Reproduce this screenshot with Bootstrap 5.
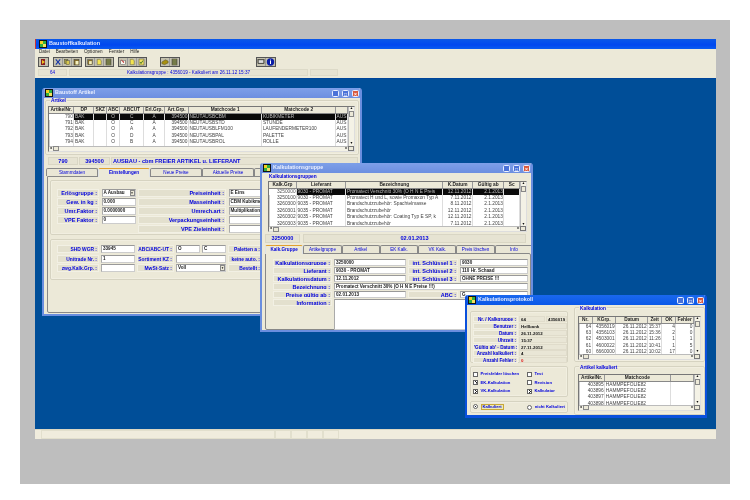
<!DOCTYPE html>
<html lang="de">
<head>
  <meta charset="UTF-8" />
  <title>Baustoffkalkulation</title>
  <link href="https://cdn.jsdelivr.net/npm/bootstrap@5.3.0/dist/css/bootstrap.min.css" rel="stylesheet" />
  <style>
    html, body { margin: 0; width: 750px; height: 500px; overflow: hidden; background: #fff; }
    body { font-family: "Liberation Sans", Arial, sans-serif; font-size: 5px; line-height: 1; color: #333; }
    .frame { width: 710px; height: 464px; margin: 20px 0 0 20px; background: #bebebe; padding: 19px 14px 45px 15px; filter: blur(.3px); }
    .app { height: 100%; background: #ece9d8; }
    .app-title { height: 10px; background: linear-gradient(#0a58e8, #0048f0 60%, #0a5cf0); color: #dfe8ff; font-weight: 700; font-size: 5.5px; padding-left: 3px; gap: 2px; border-left: 1px solid #c33; }
    .app-menu { height: 7px; padding-left: 4px; color: #222; font-size: 4.6px; }
    .app-menu span { margin-right: 6px; }
    .app-tools { height: 12px; padding: 1px 0 0 3px; }
    .tb-group { display: flex; border: 1px solid #555; background: #c4c1ae; margin-right: 3.5px; height: 10px; }
    .tb-group svg { width: 9px; height: 8px; border-right: 1px solid #999; }
    .tb-group svg:last-child { border-right: 0; }
    .tb-gap1 { margin-left: 10px; }
    .tb-gap2 { margin-left: 72px; }
    .app-info { height: 10px; padding: 1px 0 2px 3px; gap: 2px; color: #00d; font-size: 4.6px; }
    .app-info div { background: #e6e3d2; border: 1px solid #dddac8; text-align: center; line-height: 6px; }
    .ai-a { width: 29px; } .ai-b { width: 239px; } .ai-c { width: 28px; }
    .desktop { background: #004e98; overflow: hidden; border-top: 1px solid #00459a; }
    .app-status { height: 10px; background: #f0ecdd; padding-left: 6px; border-top: 1px solid #dcd8c4; }
    .app-status div { border: 1px solid #e2dfcd; }
    .st-a { width: 234px; } .st-b { width: 16px; }

    .xp-win { background: #ece9d8; border: 2px solid #6a8edf; border-top: 0; border-radius: 3px 3px 0 0; overflow: hidden; }
    .win-artikel { left: 7px; top: 9px; width: 320px; height: 228px; }
    .win-kalk { left: 225px; top: 84px; width: 273px; height: 169px; }
    .win-prot { left: 430px; top: 216px; width: 242px; height: 123px; border-color: #0a50dc; border-bottom-width: 3px; }
    .win-title { height: 10px; flex: none; background: linear-gradient(#7d9fe8, #6d8fe0); color: #e8eeff; font-weight: 700; font-size: 5.4px; padding: 0 1px 0 1px; gap: 2px; }
    .win-prot .win-title { background: linear-gradient(#1a68ee, #0a58e8); }
    .win-btn { width: 7px; height: 7px; border-radius: 1.5px; border: .5px solid #e8eeff; background: #4a72d8; margin-left: 1px; color: #fff; font-size: 5px; line-height: 6px; text-align: center; }
    .win-btn.x-btn { background: #d8583c; }
    .app-ico { width: 8px; height: 8px; flex: none; }

    .grp { position: relative; border: 1px solid #d6d3c1; border-radius: 2px; box-shadow: inset 0 0 0 .5px #f6f4e8; }
    .grp-name { position: absolute; left: 4px; top: -2px; color: #00d; font-weight: 700; font-size: 4.8px; background: #ece9d8; padding: 0 1px; }
    .art-group { margin: 2px 1px 0; height: 55px; padding: 5px 3px 0 2px; }
    .kalk-group { margin: 5px 1px 0 4px; height: 55px; padding: 3px 3px 0 2px; }
    .kalk-group .grp-name { top: -3px; left: 2px; }

    .grid-box { display: grid; grid-template-columns: 1fr 6px; grid-template-rows: 1fr 5.5px; border: 1px solid #777; border-right-color: #ddd; border-bottom-color: #ddd; background: #fff; box-shadow: inset 0 0 0 .5px #999; }
    .art-box { height: 46px; } .kalk-box { height: 51px; grid-template-rows: 1fr 5px; }
    .pk-box1 { height: 44px; } .pk-box2 { height: 37px; }
    .grid-view { overflow: hidden; }
    .xp-grid { border-collapse: collapse; table-layout: fixed; font-size: 4.8px; color: #444; white-space: nowrap; }
    .xp-grid th { background: #ece9d8; color: #222; font-weight: 700; text-align: center; height: 5.5px; line-height: 5.5px; padding: 0; border-right: .5px solid #999; border-bottom: .5px solid #888; overflow: hidden; }
    .xp-grid td { height: 6.4px; line-height: 6.4px; padding: 0 .5px; border-right: .5px solid #ddd; overflow: hidden; }
    .xp-grid tr.sel td { background: #0a0a0a; color: #bbb; }
    .xp-grid tr.sel td:first-child { background: #fff; color: #555; }
    .num { text-align: right; } .mid { text-align: center; }
    .vbar, .hbar { background: #f4f2e6; color: #111; font-size: 3.4px; display: flex; justify-content: space-between; }
    .vbar { flex-direction: column; align-items: center; border-left: .5px solid #bbb; }
    .hbar { align-items: center; border-top: .5px solid #bbb; }
    .thumb-h { width: 6px; height: 5px; background: #ece9d8; border: .5px solid #888; margin-right: auto; margin-left: 1px; }
    .thumb-v { width: 5px; height: 6px; background: #ece9d8; border: .5px solid #888; margin-bottom: auto; margin-top: 1px; }
    .corner { background: #ece9d8; border: .5px solid #777; }
    .art-cols th:nth-child(1) { width: 25px; } .art-cols th:nth-child(2) { width: 20px; } .art-cols th:nth-child(3), .art-cols th:nth-child(4) { width: 13px; }
    .art-cols th:nth-child(5) { width: 24px; } .art-cols th:nth-child(6) { width: 21px; } .art-cols th:nth-child(7) { width: 24px; }
    .art-cols th:nth-child(8), .art-cols th:nth-child(9) { width: 74px; } .art-cols th:nth-child(10) { width: 11px; }
    .kalk-cols th:nth-child(1) { width: 28px; } .kalk-cols th:nth-child(2) { width: 50px; } .kalk-cols th:nth-child(3) { width: 97px; }
    .kalk-cols th:nth-child(4) { width: 30px; } .kalk-cols th:nth-child(5) { width: 32px; } .kalk-cols th:nth-child(6) { width: 16px; }
    .pk-cols th:nth-child(1) { width: 14px; } .pk-cols th:nth-child(2) { width: 24px; } .pk-cols th:nth-child(3) { width: 33px; }
    .pk-cols th:nth-child(4) { width: 13px; } .pk-cols th:nth-child(5) { width: 15px; } .pk-cols th:nth-child(6) { width: 18px; }
    .pa-cols th:nth-child(1) { width: 26px; } .pa-cols th:nth-child(2) { width: 67px; } .pa-cols th:nth-child(3) { width: 25px; }

    .head-strip { gap: 1px; color: #00d; font-weight: 700; font-size: 5.6px; }
    .head-strip div { background: #e6e3d2; border: 1px solid #d9d6c4; line-height: 6px; white-space: nowrap; overflow: hidden; }
    .art-strip { margin: 2px 1px 0 4px; height: 8px; }
    .as-a { width: 30px; text-align: center; } .as-b { width: 31px; text-align: center; } .as-c { width: 247px; padding-left: 1px; }
    .kalk-strip { margin: 1px 1px 0 3px; height: 9px; gap: 3px; }
    .ks-a { width: 35px; text-align: center; } .ks-b { width: 223px; text-align: center; }

    .xp-tabs { --bs-nav-tabs-border-width: 0; flex-wrap: nowrap; border: 0; height: 8px; }
    .xp-tabs .nav-link { padding: 0; height: 8px; line-height: 8px; font-size: 4.6px; text-align: center; color: #00d; background: #e9e6d5; border: .5px solid #888; border-bottom: 0; border-radius: 2px 2px 0 0; margin: 0; }
    .xp-tabs .nav-link.active { background: #ece9d8; font-weight: 700; color: #00d; border-top: 1px solid #e0a030; height: 9px; position: relative; z-index: 1; }
    .art-tabs { margin: 3px 0 0 2px; } .art-tabs .nav-link { width: 52px; }
    .kalk-tabs { margin: 2px 0 0 3px; } .kalk-tabs .nav-link { width: 38.3px; }
    .tab-panel { border: .5px solid #888; border-radius: 0 2px 2px 2px; }
    .art-panel { margin: 0 2px 0 3px; height: 137px; padding: 3px 2px; }
    .kalk-panel { margin: 0 0 0 3px; height: 77px; padding: 5px 4px 0 7px; }

    .lbl { background: #e3e0ce; color: #00d; font-weight: 700; font-size: 5.5px; text-align: right; line-height: 7px; white-space: nowrap; overflow: hidden; padding-right: 1px; border: .5px solid #f2f0e4; }
    .fld { background: #fff; border: .5px solid #ccc; border-top-color: #999; border-left-color: #aaa; color: #222; font-weight: 700; font-size: 4.6px; line-height: 6.5px; padding-left: 1px; white-space: nowrap; overflow: hidden; display: flex; justify-content: space-between; }
    .combo-arrow { width: 5px; background: #ece9d8; border: .5px solid #888; color: #111; font-size: 3px; line-height: 5.5px; text-align: center; }
    .form-a { height: 55px; padding: 8px 0 0 6px; display: grid; grid-template-columns: 42px 34px 88px 72px; grid-auto-rows: 8px; gap: 1px 2.5px; margin-bottom: 4px; }
    .form-b { height: 41px; padding: 5px 0 0 6px; display: grid; grid-template-columns: 42px 34px 37px 24px 24px 34px 60px; grid-auto-rows: 8px; gap: 1.5px 2px; }
    .form-b .lbl { font-size: 4.9px; }
    .span-2 { grid-column: span 2; }
    .skip-2 { grid-column: 3; }
    .form-k { display: grid; grid-template-columns: 59px 72px 50px 68px; grid-auto-rows: 7px; gap: 1px 2px; }
    .form-k .lbl { line-height: 6px; } .form-k .fld { line-height: 6px; }
    .span-3 { grid-column: span 3; }
    .form-k .tall { grid-row: span 4; }

    .pk-left { width: 98px; margin-left: 3px; }
    .pk-right { width: 131px; margin-left: 6px; }
    .pk-fields { height: 52px; margin-top: 6px; padding: 4px 2px 0; display: grid; grid-template-columns: 45px 26px 21px; grid-auto-rows: 6px; gap: .9px 1px; }
    .pk-fields .lbl { line-height: 5px; font-size: 4.6px; }
    .pk-fields .fld { line-height: 5px; font-size: 4.4px; border-color: #e0dccb; background: #e9e6d6; color: #111; }
    .err-red { color: #e01010 !important; }
    .pk-checks { height: 31px; margin-top: 3px; padding: 3px 2px 0; display: grid; grid-template-columns: 54px 40px; grid-auto-rows: 8.5px; }
    .pk-radio { height: 12px; margin-top: 4px; padding: 0 2px; }
    .opt { color: #00d; font-weight: 700; font-size: 4.2px; gap: 2.5px; white-space: nowrap; }
    .opt input { appearance: none; width: 5px; height: 5px; margin: 0; background: #fff; border: .5px solid #666; flex: none; }
    .opt input:checked { background: linear-gradient(45deg, transparent 42%, #222 42% 62%, transparent 62%) 1px 0 / 3.5px 4px no-repeat, linear-gradient(-45deg, transparent 42%, #222 42% 62%, transparent 62%) 0 1.5px / 2.5px 3px no-repeat, #fff; }
    .opt input[type=radio] { border-radius: 50%; }
    .opt input[type=radio]:checked { background: #fff radial-gradient(circle, #222 38%, transparent 42%); }
    .focus-box { border: .5px solid #c9a838; background: #ecebb8; padding: 0 1px; }
    .radio-a { width: 55px; }
    .pk-g1 { height: 55px; margin-top: 2px; padding: 8px 3px 0; }
    .pk-g2 { height: 49px; margin-top: 4px; padding: 7px 3px 0; }
    .pk-right .grp-name { top: -1px; }
  </style>
</head>
<body>
  <svg class="d-none">
    <symbol id="i-app" viewBox="0 0 8 8"><rect x="0" y="0" width="8" height="8" fill="#111"/><rect x="1" y="1" width="3" height="3" fill="#f4d020"/><rect x="4" y="1" width="3" height="3" fill="#30b040"/><rect x="1" y="4" width="3" height="3" fill="#30b040"/><rect x="4" y="4" width="3" height="3" fill="#f4e060"/></symbol>
    <symbol id="i-exit" viewBox="0 0 9 8"><rect x="2" y="1" width="4" height="6" fill="#8a2020"/><path d="M3 2l3 2-3 2z" fill="#f0c820"/></symbol>
    <symbol id="i-cut" viewBox="0 0 9 8"><path d="M2 1l5 6M7 1L2 7" stroke="#1838a8" stroke-width="1.2"/></symbol>
    <symbol id="i-copy" viewBox="0 0 9 8"><rect x="1.5" y="1" width="4" height="5" fill="#a8a040" stroke="#444" stroke-width=".5"/><rect x="3.5" y="2.5" width="4" height="4.5" fill="#d8c850" stroke="#444" stroke-width=".5"/></symbol>
    <symbol id="i-paste" viewBox="0 0 9 8"><rect x="2" y="1.5" width="5" height="5.5" fill="#88702c" stroke="#333" stroke-width=".5"/><rect x="3.5" y="3" width="3" height="3.5" fill="#f4f0c0"/></symbol>
    <symbol id="i-doc" viewBox="0 0 9 8"><path d="M2.5 1h3l1.500 1.500V7h-4.500z" fill="#f4e450" stroke="#444" stroke-width=".5"/></symbol>
    <symbol id="i-tick" viewBox="0 0 9 8"><rect x="2" y="1" width="5" height="6" fill="#f0e060" stroke="#444" stroke-width=".5"/><path d="M3 4l1 1.500 2-3" stroke="#206020" stroke-width=".8" fill="none"/></symbol>
    <symbol id="i-pen" viewBox="0 0 9 8"><rect x="2" y="2" width="5" height="5" fill="#f8f8f0" stroke="#444" stroke-width=".5"/><path d="M2 1l4 3-1 1z" fill="#c02020"/></symbol>
    <symbol id="i-box" viewBox="0 0 9 8"><path d="M1 4l4-2.500L8 3v2L4 7 1 6z" fill="#a89010" stroke="#443" stroke-width=".5"/></symbol>
    <symbol id="i-grid" viewBox="0 0 9 8"><rect x="2" y="1" width="5" height="6" fill="#8c9450" stroke="#333" stroke-width=".5"/><path d="M2 3h5M2 5h5" stroke="#333" stroke-width=".5"/></symbol>
    <symbol id="i-mon" viewBox="0 0 9 8"><rect x="1" y="1" width="7" height="5" fill="#6a6a60" stroke="#222" stroke-width=".5"/><rect x="2" y="2" width="5" height="3" fill="#ddd"/></symbol>
    <symbol id="i-info" viewBox="0 0 9 8"><circle cx="4.500" cy="4" r="3.700" fill="#0a1ea8"/><rect x="4" y="3" width="1" height="3" fill="#fff"/><rect x="4" y="1.600" width="1" height="1" fill="#fff"/></symbol>
  </svg>

  <div class="frame">
    <div class="app d-flex flex-column">
      <div class="app-title d-flex align-items-center"><svg class="app-ico"><use href="#i-app"/></svg><span>Baustoffkalkulation</span></div>
      <div class="app-menu d-flex align-items-center"><span>Datei</span><span>Bearbeiten</span><span>Optionen</span><span>Fenster</span><span>Hilfe</span></div>
      <div class="app-tools d-flex">
        <div class="tb-group"><svg><use href="#i-exit"/></svg></div>
        <div class="tb-group"><svg><use href="#i-cut"/></svg><svg><use href="#i-copy"/></svg><svg><use href="#i-paste"/></svg></div>
        <div class="tb-group"><svg><use href="#i-paste"/></svg><svg><use href="#i-doc"/></svg><svg><use href="#i-grid"/></svg></div>
        <div class="tb-group"><svg><use href="#i-pen"/></svg><svg><use href="#i-doc"/></svg><svg><use href="#i-tick"/></svg></div>
        <div class="tb-group tb-gap1"><svg><use href="#i-box"/></svg><svg><use href="#i-grid"/></svg></div>
        <div class="tb-group tb-gap2"><svg><use href="#i-mon"/></svg><svg><use href="#i-info"/></svg></div>
      </div>
      <div class="app-info d-flex"><div class="ai-a">64</div><div class="ai-b">Kalkulationsgruppe : 4356019 - Kalkuliert am 26.11.12 15:37</div><div class="ai-c"></div></div>

      <div class="desktop flex-grow-1 position-relative">

        <div class="xp-win win-artikel position-absolute d-flex flex-column">
          <div class="win-title d-flex align-items-center"><svg class="app-ico"><use href="#i-app"/></svg><span class="flex-grow-1">Baustoff Artikel</span><div class="win-btn">_</div><div class="win-btn">□</div><div class="win-btn x-btn">×</div></div>
          <div class="grp art-group">
            <span class="grp-name">Artikel</span>
            <div class="grid-box art-box">
              <div class="grid-view">
                <table class="xp-grid art-cols">
                  <thead><tr><th>ArtikelNr.</th><th>DP</th><th>SKZ</th><th>ABC</th><th>ABCUT</th><th>Erl.Grp.</th><th>Art.Grp.</th><th>Matchcode 1</th><th>Matchcode 2</th><th></th></tr></thead>
                  <tbody>
                    <tr class="sel"><td class="num">790</td><td>BAK</td><td></td><td class="mid">O</td><td class="mid">C</td><td class="mid">A</td><td class="num">394500</td><td>NEUTAUSBCBM</td><td>KUBIKMETER</td><td>AUS</td></tr>
                    <tr><td class="num">791</td><td>BAK</td><td></td><td class="mid">O</td><td class="mid">C</td><td class="mid">A</td><td class="num">394500</td><td>NEUTAUSBSTD</td><td>STUNDE</td><td>AUS</td></tr>
                    <tr><td class="num">792</td><td>BAK</td><td></td><td class="mid">O</td><td class="mid">A</td><td class="mid">A</td><td class="num">394500</td><td>NEUTAUSBLFM100</td><td>LAUFENDERMETER100</td><td>AUS</td></tr>
                    <tr><td class="num">793</td><td>BAK</td><td></td><td class="mid">O</td><td class="mid">D</td><td class="mid">A</td><td class="num">394500</td><td>NEUTAUSBPAL</td><td>PALETTE</td><td>AUS</td></tr>
                    <tr><td class="num">794</td><td>BAK</td><td></td><td class="mid">O</td><td class="mid">B</td><td class="mid">A</td><td class="num">394500</td><td>NEUTAUSBROL</td><td>ROLLE</td><td>AUS</td></tr>
                  </tbody>
                </table>
              </div>
              <div class="vbar"><span>▲</span><div class="thumb-v"></div><span>▼</span></div>
              <div class="hbar"><span>◄</span><div class="thumb-h"></div><span>►</span></div>
              <div class="corner"></div>
            </div>
          </div>
          <div class="head-strip art-strip d-flex"><div class="as-a">790</div><div class="as-b">394500</div><div class="as-c">AUSBAU - cbm FREIER ARTIKEL u. LIEFERANT</div></div>
          <ul class="nav nav-tabs xp-tabs art-tabs">
            <li class="nav-item"><a class="nav-link">Stammdaten</a></li>
            <li class="nav-item"><a class="nav-link active">Einstellungen</a></li>
            <li class="nav-item"><a class="nav-link">Neue Preise</a></li>
            <li class="nav-item"><a class="nav-link">Aktuelle Preise</a></li>
            <li class="nav-item"><a class="nav-link">Statistik</a></li>
            <li class="nav-item"><a class="nav-link">Info</a></li>
          </ul>
          <div class="tab-panel art-panel">
            <div class="grp form-a">
              <div class="lbl">Erlösgruppe :</div><div class="fld">A Ausbau<span class="combo-arrow">▼</span></div><div class="lbl">Preiseinheit :</div><div class="fld">E Eins</div>
              <div class="lbl">Gew. in kg :</div><div class="fld">0.000</div><div class="lbl">Masseinheit :</div><div class="fld">CBM Kubikmeter</div>
              <div class="lbl">Umr.Faktor :</div><div class="fld">0.0000000</div><div class="lbl">Umrech.art :</div><div class="fld">Multiplikation</div>
              <div class="lbl">VPE Faktor :</div><div class="fld">0</div><div class="lbl">Verpackungseinheit :</div><div class="fld"></div>
              <div class="lbl skip-2">VPE Zieleinheit :</div><div class="fld"></div>
            </div>
            <div class="grp form-b">
              <div class="lbl">SHD WGR :</div><div class="fld">33945</div><div class="lbl">ABC/ABC-UT :</div><div class="fld">O</div><div class="fld">C</div><div class="lbl">Paletten a :</div><div class="fld"></div>
              <div class="lbl">Unitrade Nr. :</div><div class="fld">1</div><div class="lbl">Sortiment KZ :</div><div class="fld span-2"></div><div class="lbl">keine auto. :</div><div class="fld"></div>
              <div class="lbl">zwg.Kalk.Grp. :</div><div class="fld"></div><div class="lbl">MwSt-Satz :</div><div class="fld span-2">Voll<span class="combo-arrow">▼</span></div><div class="lbl">Bestellt :</div><div class="fld"></div>
            </div>
          </div>
        </div>

        <div class="xp-win win-kalk position-absolute d-flex flex-column">
          <div class="win-title d-flex align-items-center"><svg class="app-ico"><use href="#i-app"/></svg><span class="flex-grow-1">Kalkulationsgruppe</span><div class="win-btn">_</div><div class="win-btn">□</div><div class="win-btn x-btn">×</div></div>
          <div class="kalk-group position-relative">
            <span class="grp-name">Kalkulationsgruppen</span>
            <div class="grid-box kalk-box">
              <div class="grid-view">
                <table class="xp-grid kalk-cols">
                  <thead><tr><th>Kalk.Grp</th><th>Lieferant</th><th>Bezeichnung</th><th>K.Datum</th><th>Gültig ab</th><th>Sc</th></tr></thead>
                  <tbody>
                    <tr class="sel"><td class="num">3250000</td><td>9030 - PROMAT</td><td>Promatect Verschnitt 30%  (O H N E  Preis</td><td class="num">12.11.2012</td><td class="num">2.1.2013</td><td></td></tr>
                    <tr><td class="num">3250100</td><td>9030 - PROMAT</td><td>Promatect H und L, sowie Promaxon Typ A</td><td class="num">7.11.2012</td><td class="num">2.1.2013</td><td></td></tr>
                    <tr><td class="num">3260300</td><td>9035 - PROMAT</td><td>Brandschutzzubehör:  Spachtelmasse</td><td class="num">8.11.2012</td><td class="num">2.1.2013</td><td></td></tr>
                    <tr><td class="num">3260301</td><td>9035 - PROMAT</td><td>Brandschutzzubehör</td><td class="num">12.11.2012</td><td class="num">2.1.2013</td><td></td></tr>
                    <tr><td class="num">3260302</td><td>9035 - PROMAT</td><td>Brandschutzzubehör:  Coating Typ E SP, k</td><td class="num">12.11.2012</td><td class="num">2.1.2013</td><td></td></tr>
                    <tr><td class="num">3260303</td><td>9035 - PROMAT</td><td>Brandschutzzubehör</td><td class="num">7.11.2012</td><td class="num">2.1.2013</td><td></td></tr>
                  </tbody>
                </table>
              </div>
              <div class="vbar"><span>▲</span><div class="thumb-v"></div><span>▼</span></div>
              <div class="hbar"><span>◄</span><div class="thumb-h"></div><span>►</span></div>
              <div class="corner"></div>
            </div>
          </div>
          <div class="head-strip kalk-strip d-flex"><div class="ks-a">3250000</div><div class="ks-b">02.01.2013</div></div>
          <ul class="nav nav-tabs xp-tabs kalk-tabs">
            <li class="nav-item"><a class="nav-link active">Kalk.Gruppe</a></li>
            <li class="nav-item"><a class="nav-link">Artikelgruppe</a></li>
            <li class="nav-item"><a class="nav-link">Artikel</a></li>
            <li class="nav-item"><a class="nav-link">EK Kalk.</a></li>
            <li class="nav-item"><a class="nav-link">VK Kalk.</a></li>
            <li class="nav-item"><a class="nav-link">Preis löschen</a></li>
            <li class="nav-item"><a class="nav-link">Info</a></li>
          </ul>
          <div class="tab-panel kalk-panel">
            <div class="form-k">
              <div class="lbl">Kalkulationsgruppe :</div><div class="fld">3250000</div><div class="lbl">int. Schlüssel 1 :</div><div class="fld">9030</div>
              <div class="lbl">Lieferant :</div><div class="fld">9030 - PROMAT</div><div class="lbl">int. Schlüssel 2 :</div><div class="fld">110 Hr. Schaad</div>
              <div class="lbl">Kalkulationsdatum :</div><div class="fld">12.11.2012</div><div class="lbl">int. Schlüssel 3 :</div><div class="fld">OHNE PREISE !!!</div>
              <div class="lbl">Bezeichnung :</div><div class="fld span-3">Promatect Verschnitt 30%  (O H N E  Preise !!!)</div>
              <div class="lbl">Preise gültig ab :</div><div class="fld">02.01.2013</div><div class="lbl">ABC :</div><div class="fld">G</div>
              <div class="lbl">Information :</div><div class="fld span-3 tall"></div>
            </div>
          </div>
        </div>

        <div class="xp-win win-prot position-absolute d-flex flex-column">
          <div class="win-title d-flex align-items-center"><svg class="app-ico"><use href="#i-app"/></svg><span class="flex-grow-1">Kalkulationsprotokoll</span><div class="win-btn">_</div><div class="win-btn">□</div><div class="win-btn x-btn">×</div></div>
          <div class="d-flex">
            <div class="pk-left">
              <div class="grp pk-fields">
                <div class="lbl">Nr. / Kalkgruppe :</div><div class="fld">64</div><div class="fld">4356019</div>
                <div class="lbl">Benutzer :</div><div class="fld span-2">Hellbank</div>
                <div class="lbl">Datum :</div><div class="fld span-2">26.11.2012</div>
                <div class="lbl">Uhrzeit :</div><div class="fld span-2">15:37</div>
                <div class="lbl">'Gültig ab' - Datum :</div><div class="fld span-2">27.11.2012</div>
                <div class="lbl">Anzahl kalkuliert :</div><div class="fld span-2">4</div>
                <div class="lbl">Anzahl Fehler :</div><div class="fld span-2 err-red">0</div>
              </div>
              <div class="grp pk-checks">
                <label class="opt d-flex align-items-center"><input type="checkbox" />Preisfelder löschen</label><label class="opt d-flex align-items-center"><input type="checkbox" />Test</label>
                <label class="opt d-flex align-items-center"><input type="checkbox" checked />EK-Kalkulation</label><label class="opt d-flex align-items-center"><input type="checkbox" />Revision</label>
                <label class="opt d-flex align-items-center"><input type="checkbox" checked />VK-Kalkulation</label><label class="opt d-flex align-items-center"><input type="checkbox" checked />Kalkulator</label>
              </div>
              <div class="grp pk-radio d-flex align-items-center">
                <label class="opt radio-a d-flex align-items-center"><input type="radio" name="pk" checked /><span class="focus-box">Kalkuliert</span></label>
                <label class="opt d-flex align-items-center"><input type="radio" name="pk" />nicht Kalkuliert</label>
              </div>
            </div>
            <div class="pk-right">
              <div class="grp pk-g1">
                <span class="grp-name">Kalkulation</span>
                <div class="grid-box pk-box1">
                  <div class="grid-view">
                    <table class="xp-grid pk-cols">
                      <thead><tr><th>Nr.</th><th>KGrp.</th><th>Datum</th><th>Zeit</th><th>OK</th><th>Fehler</th></tr></thead>
                      <tbody>
                        <tr><td class="num">64</td><td class="num">4356019</td><td class="num">26.11.2012</td><td class="num">15:37</td><td class="num">4</td><td class="num">0</td></tr>
                        <tr><td class="num">63</td><td class="num">4356103</td><td class="num">26.11.2012</td><td class="num">15:36</td><td class="num">2</td><td class="num">0</td></tr>
                        <tr><td class="num">62</td><td class="num">4503001</td><td class="num">26.11.2012</td><td class="num">11:26</td><td class="num">1</td><td class="num">1</td></tr>
                        <tr><td class="num">61</td><td class="num">4600022</td><td class="num">26.11.2012</td><td class="num">10:41</td><td class="num">1</td><td class="num">5</td></tr>
                        <tr><td class="num">60</td><td class="num">6660000</td><td class="num">26.11.2012</td><td class="num">10:02</td><td class="num">17</td><td class="num">0</td></tr>
                      </tbody>
                    </table>
                  </div>
                  <div class="vbar"><span>▲</span><div class="thumb-v"></div><span>▼</span></div>
                  <div class="hbar"><span>◄</span><div class="thumb-h"></div><span>►</span></div>
                  <div class="corner"></div>
                </div>
              </div>
              <div class="grp pk-g2">
                <span class="grp-name">Artikel kalkuliert</span>
                <div class="grid-box pk-box2">
                  <div class="grid-view">
                    <table class="xp-grid pa-cols">
                      <thead><tr><th>ArtikelNr.</th><th>Matchcode</th><th></th></tr></thead>
                      <tbody>
                        <tr><td class="num">403895</td><td>HAMMPEFOLIE82</td><td></td></tr>
                        <tr><td class="num">403896</td><td>HAMMPEFOLIE82</td><td></td></tr>
                        <tr><td class="num">403897</td><td>HAMMPEFOLIE82</td><td></td></tr>
                        <tr><td class="num">403898</td><td>HAMMPEFOLIE82</td><td></td></tr>
                      </tbody>
                    </table>
                  </div>
                  <div class="vbar"><span>▲</span><div class="thumb-v"></div><span>▼</span></div>
                  <div class="hbar"><span>◄</span><div class="thumb-h"></div><span>►</span></div>
                  <div class="corner"></div>
                </div>
              </div>
            </div>
          </div>
        </div>

      </div>
      <div class="app-status d-flex"><div class="st-a"></div><div class="st-b"></div><div class="st-b"></div><div class="st-b"></div><div class="st-b"></div></div>
    </div>
  </div>
</body>
</html>
